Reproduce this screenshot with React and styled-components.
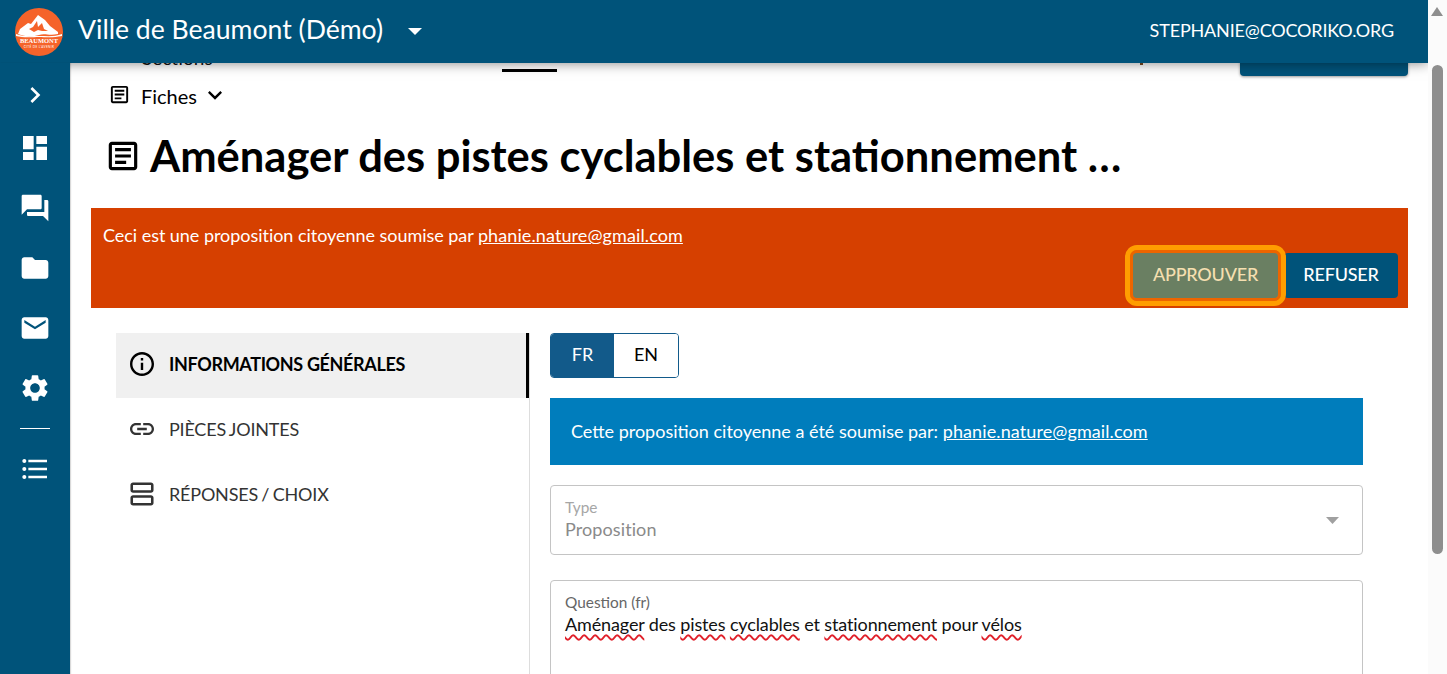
import React from "react";
import styled, { createGlobalStyle } from "styled-components";

const Global = createGlobalStyle`
  html, body { margin: 0; padding: 0; height: 100%; overflow: hidden; background: #fff; }
  body { font-family: Lato, "Liberation Sans", sans-serif; color: #000; }
  * { box-sizing: border-box; }
`;

const Shell = styled.div`
  height: 674px;
  width: 1447px;
  display: flex;
  overflow: hidden;
`;
const Viewport = styled.div`
  position: relative;
  width: 1428px;
  height: 674px;
  display: flex;
  overflow: hidden;
`;
const AppBar = styled.header`
  position: absolute;
  top: 0;
  left: 0;
  right: 0;
  height: 63px;
  z-index: 3;
  background: #00537a;
  box-shadow: 0 0 12px rgba(0, 0, 0, 0.5);
  display: flex;
  align-items: center;
  color: #fff;
  padding: 0 34px 0 15px;
`;
const Logo = styled.svg`
  width: 48px;
  height: 48px;
  flex: none;
  margin-top: 1px;
`;
const OrgName = styled.div`
  font-size: 26.6px;
  margin-left: 15px;
  margin-top: -5px;
  white-space: nowrap;
`;
const Caret = styled.svg`
  width: 14px;
  height: 7px;
  margin-left: 25px;
  margin-top: -1px;
`;
const UserEmail = styled.div`
  margin-left: auto;
  font-size: 18px;
  letter-spacing: -0.17px;
  margin-top: -3px;
`;
const SideBar = styled.nav`
  flex: none;
  width: 70px;
  height: 611px;
  margin-top: 63px;
  background: #00537a;
  box-shadow: 1px 0 1px rgba(0, 0, 0, 0.15);
  display: flex;
  flex-direction: column;
  align-items: center;
  z-index: 4;
`;
const SideIcon = styled.svg`
  width: 32px;
  height: 32px;
  fill: #fff;
  display: block;
  flex: none;
  margin-top: ${(p) => p.$mt || 28}px;
`;
const SideRule = styled.div`
  width: 30px;
  height: 1px;
  background: #fff;
  margin-top: 24px;
`;
const Main = styled.main`
  flex: 1;
  min-width: 0;
  display: flex;
  flex-direction: column;
  padding: 0 20px 0 21px;
  & > * {
    flex: none;
  }
`;
const TopTabs = styled.div`
  position: relative;
  height: 72px;
`;
const TabLabel = styled.div`
  position: absolute;
  left: 51px;
  bottom: 3px;
  font-size: 19px;
  line-height: 22px;
  color: #111;
`;
const TabDescender = styled.div`
  position: absolute;
  left: 1049px;
  bottom: 7px;
  width: 3px;
  height: 2px;
  background: #7a4a20;
`;
const TabUnderline = styled.div`
  position: absolute;
  left: 411px;
  bottom: 0;
  width: 55px;
  height: 3px;
  background: #000;
`;
const TopAction = styled.div`
  position: absolute;
  right: 0;
  bottom: -4px;
  width: 168px;
  height: 40px;
  border-radius: 4px;
  background: #00537a;
  box-shadow: 0 1px 3px rgba(0, 0, 0, 0.4);
`;
const Breadcrumb = styled.div`
  display: flex;
  align-items: center;
  height: 24px;
  margin-top: 12px;
  margin-left: 17px;
  font-size: 20px;
`;
const CrumbLabel = styled.span`
  margin-left: 10px;
  margin-right: 4px;
`;
const SmallIcon = styled.svg`
  width: ${(p) => p.$s || 24}px;
  height: ${(p) => p.$s || 24}px;
  fill: ${(p) => p.$c || "#000"};
  margin-top: ${(p) => p.$mt || 0}px;
  flex: none;
  display: block;
`;
const TitleRow = styled.div`
  display: flex;
  align-items: center;
  height: 60px;
  margin-top: 18px;
  margin-left: 13px;
`;
const Title = styled.h1`
  margin: 0 0 2px 8px;
  font-size: 43.5px;
  font-weight: 700;
  line-height: 60px;
  white-space: nowrap;
`;
const Banner = styled.div`
  height: 100px;
  margin-top: 22px;
  background: #d64000;
  color: #fff;
  padding: 16px 10px 0 12px;
  font-size: 18px;
  display: flex;
  flex-direction: column;
`;
const BannerText = styled.div`
  line-height: 22px;
  letter-spacing: -0.04px;
`;
const Mail = styled.a`
  color: inherit;
  text-decoration: underline;
  letter-spacing: 0.1px;
`;
const BannerActions = styled.div`
  display: flex;
  justify-content: flex-end;
  margin-top: 7px;
`;
const ActionButton = styled.button`
  position: relative;
  height: 45px;
  width: ${(p) => p.$w}px;
  margin-left: ${(p) => (p.$focus ? 0 : 6)}px;
  border: 0;
  border-radius: 4px;
  font-family: inherit;
  font-size: 18px;
  font-weight: 500;
  letter-spacing: -0.2px;
  color: ${(p) => (p.$focus ? "#f5dfb0" : "#fff")};
  background: ${(p) => (p.$focus ? "#6a7f62" : "#00537a")};
  outline: ${(p) => (p.$focus ? "5px solid #ff9d00" : "none")};
  outline-offset: 3px;
  box-shadow: ${(p) => (p.$focus ? "0 0 0 3px #ed6500" : "none")};
  padding: 0 0 3px;
  z-index: ${(p) => (p.$focus ? 1 : 0)};
`;
const Columns = styled.div`
  display: grid;
  grid-template-columns: 414px 1fr;
  margin-left: 25px;
  margin-top: 25px;
`;
const Menu = styled.div`
  display: flex;
  flex-direction: column;
  height: 400px;
  border-right: 1px solid #ddd;
`;
const MenuItem = styled.div`
  height: 65px;
  display: flex;
  align-items: center;
  padding: 0 0 3px 11px;
  gap: 12px;
  font-size: 18px;
  color: ${(p) => (p.$active ? "#000" : "#333")};
  font-weight: ${(p) => (p.$active ? 700 : 400)};
  letter-spacing: ${(p) => (p.$active ? "-0.35px" : "-0.2px")};
  word-spacing: ${(p) => (p.$active ? "0" : "-1px")};
  background: ${(p) => (p.$active ? "#f0f0f0" : "transparent")};
  border-right: ${(p) => (p.$active ? "3px solid #000" : "0")};
`;
const Form = styled.div`
  padding-left: 20px;
  width: 833px;
`;
const LangToggle = styled.div`
  display: flex;
  width: 129px;
  height: 45px;
  border: 1px solid #125a8a;
  border-radius: 4px;
  overflow: hidden;
  font-size: 18px;
`;
const LangOption = styled.div`
  flex: ${(p) => (p.$active ? "0 0 63px" : 1)};
  display: flex;
  align-items: center;
  justify-content: center;
  padding-bottom: 3px;
  background: ${(p) => (p.$active ? "#125a8a" : "#fff")};
  color: ${(p) => (p.$active ? "#fff" : "#000")};
`;
const InfoBox = styled.div`
  margin-top: 20px;
  height: 67px;
  background: #007dbc;
  color: #fff;
  font-size: 18px;
  display: flex;
  align-items: center;
  padding: 0 0 2px 21px;
  white-space: pre;
`;
const Field = styled.div`
  position: relative;
  margin-top: ${(p) => p.$mt}px;
  height: ${(p) => p.$h}px;
  border: 1px solid #c4c4c4;
  border-radius: 4px;
  padding: 13px 14px 0;
`;
const FieldLabel = styled.div`
  font-size: 15.4px;
  line-height: 17px;
  color: ${(p) => (p.$muted ? "#a6a6a6" : "#666")};
`;
const FieldValue = styled.div`
  font-size: 18px;
  line-height: 24px;
  margin-top: 1px;
  letter-spacing: ${(p) => (p.$muted ? "0.1px" : "-0.13px")};
  color: ${(p) => (p.$muted ? "#8a8a8a" : "#111")};
`;
const Misspelled = styled.span`
  text-decoration: underline wavy #e0202a 1.5px;
  text-underline-offset: 3px;
`;
const SelectArrow = styled.svg`
  position: absolute;
  right: 23px;
  top: 31px;
  width: 13px;
  height: 7px;
  fill: #a0a0a0;
`;
const ScrollTrack = styled.div`
  position: relative;
  flex: none;
  width: 19px;
  height: 674px;
  background: #fbfbfb;
`;
const ScrollArrow = styled.div`
  position: absolute;
  left: 3px;
  top: 7px;
  width: 0;
  height: 0;
  border-left: 6.5px solid transparent;
  border-right: 6.5px solid transparent;
  border-bottom: 9px solid #8e8e8e;
`;
const ScrollThumb = styled.div`
  position: absolute;
  left: 4px;
  top: 65px;
  width: 11px;
  height: 489px;
  border-radius: 6px;
  background: #8e8e8e;
`;

const ArticleIcon = (props) => (
  <SmallIcon viewBox="0 0 24 24" {...props}>
    <path d="M19 5v14H5V5h14m0-2H5c-1.100 0-2 .9-2 2v14c0 1.100.9 2 2 2h14c1.100 0 2-.9 2-2V5c0-1.100-.9-2-2-2z" />
    <path d="M14 17H7v-2h7v2zm3-4H7v-2h10v2zm0-4H7V7h10v2z" />
  </SmallIcon>
);

export default function App() {
  return (
    <Shell>
      <Global />
      <Viewport>
        <AppBar>
          <Logo viewBox="0 0 48 48">
            <circle cx="24" cy="24" r="24" fill="#f5632a" />
            <path d="M5 21 L13 15 L16 16 L23 7 L30 12 L35 18 L43 24 L43 26 C34 28 30 25 24 27 S10 29 3 26 Z" fill="#fff" />
            <path d="M14 21 L18 19 L22 13 L23 19 L27 15 L29 21 L33 23 L27 23 L23 22 L19 24 Z" fill="#f5632a" />
            <path d="M1 26 C8 29 16 28 24 28 S40 29 47 26 L47 28 C38 30 30 29 24 29 S8 30 1 28 Z" fill="#fff" />
            <text x="5" y="35" textLength="38" lengthAdjust="spacingAndGlyphs" fontFamily="'Liberation Serif', serif" fontSize="6.6" fontWeight="700" fill="#fff">BEAUMONT</text>
            <text x="24" y="40" textAnchor="middle" fontFamily="Lato, sans-serif" fontSize="3" fill="#fff" letterSpacing="0.4">CITÉ DE L'AVENIR</text>
          </Logo>
          <OrgName>Ville de Beaumont (Démo)</OrgName>
          <Caret viewBox="0 0 14 7">
            <path d="M0 0h14L7 7z" fill="#fff" />
          </Caret>
          <UserEmail>STEPHANIE@COCORIKO.ORG</UserEmail>
        </AppBar>

        <SideBar>
          <SideIcon $mt={16} viewBox="0 0 24 24">
            <path d="M8.590 16.590 13.170 12 8.590 7.410 10 6l6 6-6 6z" />
          </SideIcon>
          <SideIcon $mt={21} viewBox="0 0 24 24">
            <path d="M3 13h8V3H3v10zm0 8h8v-6H3v6zm10 0h8V11h-8v10zm0-18v6h8V3h-8z" />
          </SideIcon>
          <SideIcon viewBox="0 0 24 24">
            <path d="M21 6h-2v9H6v2c0 .55.45 1 1 1h11l4 4V7c0-.55-.45-1-1-1zm-4 6V3c0-.55-.45-1-1-1H3c-.55 0-1 .45-1 1v14l4-4h10c.55 0 1-.45 1-1z" />
          </SideIcon>
          <SideIcon viewBox="0 0 24 24">
            <path d="M10 4H4c-1.100 0-2 .9-2 2v12c0 1.100.9 2 2 2h16c1.100 0 2-.9 2-2V8c0-1.100-.9-2-2-2h-8l-2-2z" />
          </SideIcon>
          <SideIcon viewBox="0 0 24 24">
            <path d="M20 4H4c-1.100 0-2 .9-2 2v12c0 1.100.9 2 2 2h16c1.100 0 2-.9 2-2V6c0-1.100-.9-2-2-2zm0 4-8 5-8-5V6l8 5 8-5v2z" />
          </SideIcon>
          <SideIcon viewBox="0 0 24 24">
            <path d="M19.140 12.940c.04-.3.06-.61.06-.94 0-.32-.02-.64-.07-.94l2.030-1.580a.49.49 0 0 0 .12-.61l-1.920-3.320a.488.488 0 0 0-.59-.22l-2.390.96c-.5-.38-1.030-.7-1.620-.94l-.36-2.540a.484.484 0 0 0-.48-.41h-3.840c-.24 0-.43.17-.47.41l-.36 2.540c-.59.24-1.130.57-1.620.94l-2.390-.96c-.22-.08-.47 0-.59.22L2.740 8.870c-.12.21-.08.47.12.61l2.030 1.580c-.05.3-.09.63-.09.94s.02.64.07.94l-2.030 1.580a.49.49 0 0 0-.12.61l1.920 3.320c.12.22.37.29.59.22l2.390-.96c.5.38 1.030.7 1.620.94l.36 2.540c.05.24.24.41.48.41h3.840c.24 0 .44-.17.47-.41l.36-2.540c.59-.24 1.130-.56 1.620-.94l2.390.96c.22.08.47 0 .59-.22l1.920-3.320c.12-.22.07-.47-.12-.61l-2.010-1.580zM12 15.600c-1.980 0-3.600-1.620-3.600-3.600s1.620-3.600 3.600-3.600 3.600 1.620 3.600 3.600-1.620 3.600-3.600 3.600z" />
          </SideIcon>
          <SideRule />
          <SideIcon $mt={24} viewBox="0 0 24 24">
            <path d="M4 10.500c-.83 0-1.500.67-1.500 1.500s.67 1.500 1.500 1.500 1.500-.67 1.500-1.500-.67-1.500-1.500-1.500zm0-6c-.83 0-1.500.67-1.500 1.500S3.170 7.500 4 7.500 5.500 6.830 5.500 6 4.830 4.500 4 4.500zm0 12c-.83 0-1.500.68-1.500 1.500s.68 1.500 1.500 1.500 1.500-.68 1.500-1.500-.67-1.500-1.500-1.500zM7 19h14v-2H7v2zm0-6h14v-2H7v2zm0-8v2h14V5H7z" />
          </SideIcon>
        </SideBar>

        <Main>
          <TopTabs>
            <TabLabel>Sections</TabLabel>
            <TabDescender />
            <TabUnderline />
            <TopAction />
          </TopTabs>
          <Breadcrumb>
            <ArticleIcon $s={23} $mt={-4} />
            <CrumbLabel>Fiches</CrumbLabel>
            <SmallIcon $s={28} $mt={-2} viewBox="0 0 24 24">
              <path d="M7.410 8.590 12 13.170l4.590-4.580L18 10l-6 6-6-6z" />
            </SmallIcon>
          </Breadcrumb>
          <TitleRow>
            <ArticleIcon $s={38} />
            <Title>Aménager des pistes cyclables et stationnement …</Title>
          </TitleRow>
          <Banner>
            <BannerText>
              Ceci est une proposition citoyenne soumise par <Mail>phanie.nature@gmail.com</Mail>
            </BannerText>
            <BannerActions>
              <ActionButton $focus $w={145}>APPROUVER</ActionButton>
              <ActionButton $w={114}>REFUSER</ActionButton>
            </BannerActions>
          </Banner>
          <Columns>
            <Menu>
              <MenuItem $active>
                <SmallIcon $s={30} viewBox="-0.5 -0.5 25 25">
                  <path d="M11 7h2v2h-2zm0 4h2v6h-2zm1-9C6.480 2 2 6.480 2 12s4.480 10 10 10 10-4.480 10-10S17.520 2 12 2zm0 18c-4.410 0-8-3.590-8-8s3.590-8 8-8 8 3.590 8 8-3.590 8-8 8z" />
                </SmallIcon>
                INFORMATIONS GÉNÉRALES
              </MenuItem>
              <MenuItem>
                <SmallIcon $s={30} $c="#333" viewBox="-0.5 -0.5 25 25">
                  <path d="M3.900 12c0-1.710 1.390-3.100 3.100-3.100h4V7H7c-2.760 0-5 2.240-5 5s2.240 5 5 5h4v-1.900H7c-1.710 0-3.100-1.390-3.100-3.100zM8 13h8v-2H8v2zm9-6h-4v1.900h4c1.710 0 3.100 1.390 3.100 3.100s-1.390 3.100-3.100 3.100h-4V17h4c2.760 0 5-2.240 5-5s-2.240-5-5-5z" />
                </SmallIcon>
                PIÈCES JOINTES
              </MenuItem>
              <MenuItem>
                <SmallIcon $s={30} $c="#333" viewBox="0.3 0.3 23.4 23.4">
                  <path d="M19 13H5c-1.100 0-2 .9-2 2v4c0 1.100.9 2 2 2h14c1.100 0 2-.9 2-2v-4c0-1.100-.9-2-2-2zm0 6H5v-4h14v4zM19 3H5c-1.100 0-2 .9-2 2v4c0 1.100.9 2 2 2h14c1.100 0 2-.9 2-2V5c0-1.100-.9-2-2-2zm0 6H5V5h14v4z" />
                </SmallIcon>
                RÉPONSES / CHOIX
              </MenuItem>
            </Menu>
            <Form>
              <LangToggle>
                <LangOption $active>FR</LangOption>
                <LangOption>EN</LangOption>
              </LangToggle>
              <InfoBox>
                Cette proposition citoyenne a été soumise par: <Mail>phanie.nature@gmail.com</Mail>
              </InfoBox>
              <Field $mt={20} $h={70}>
                <FieldLabel $muted>Type</FieldLabel>
                <FieldValue $muted>Proposition</FieldValue>
                <SelectArrow viewBox="0 0 13 7">
                  <path d="M0 0h13L6.500 7z" />
                </SelectArrow>
              </Field>
              <Field $mt={25} $h={140}>
                <FieldLabel>Question (fr)</FieldLabel>
                <FieldValue>
                  <Misspelled>Aménager</Misspelled> des <Misspelled>pistes</Misspelled>{" "}
                  <Misspelled>cyclables</Misspelled> et <Misspelled>stationnement</Misspelled> pour{" "}
                  <Misspelled>vélos</Misspelled>
                </FieldValue>
              </Field>
            </Form>
          </Columns>
        </Main>
      </Viewport>
      <ScrollTrack>
        <ScrollArrow />
        <ScrollThumb />
      </ScrollTrack>
    </Shell>
  );
}
